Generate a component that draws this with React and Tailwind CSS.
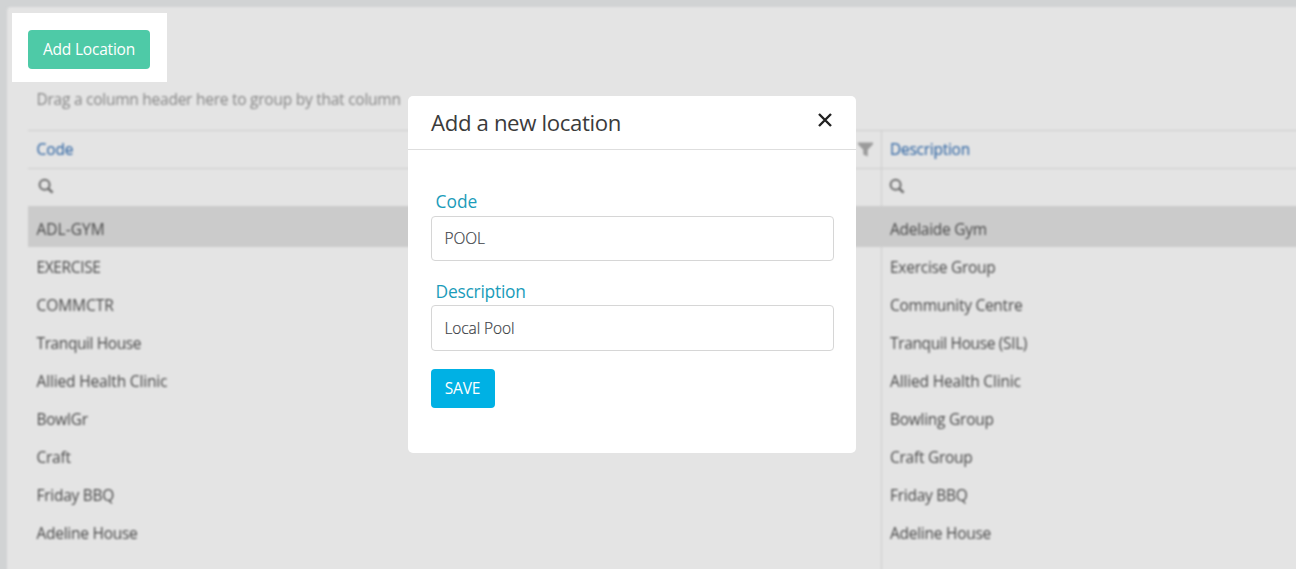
import React from "react";

const rows = [
  { code: "ADL-GYM", codeClass: "tracking-[0.02px]", description: "Adelaide Gym", selected: true },
  { code: "EXERCISE", codeClass: "tracking-[-0.36px]", description: "Exercise Group" },
  { code: "COMMCTR", codeClass: "tracking-[-0.05px]", description: "Community Centre" },
  { code: "Tranquil House", codeClass: "tracking-[-0.4px]", description: "Tranquil House (SIL)", descriptionClass: "tracking-[-0.36px]" },
  { code: "Allied Health Clinic", codeClass: "tracking-[-0.15px]", description: "Allied Health Clinic", descriptionClass: "tracking-[-0.15px]" },
  { code: "BowlGr", description: "Bowling Group" },
  { code: "Craft", description: "Craft Group" },
  { code: "Friday BBQ", description: "Friday BBQ" },
  { code: "Adeline House", description: "Adeline House" },
];

function SearchIcon() {
  return (
    <svg className="size-4 text-[#6c6c6c]" viewBox="0 0 16 16" fill="none" stroke="currentColor">
      <circle cx="6.6" cy="6.8" r="5" strokeWidth="2" />
      <path d="M10.2 10.6 14.6 14.6" strokeWidth="2.6" />
    </svg>
  );
}

function FilterIcon() {
  return (
    <svg className="h-[15px] w-[15px] text-[#9b9b9b]" viewBox="0 0 15 15" fill="currentColor">
      <path d="M0 0.5h15v1.8L9.7 7.8V14.5L5.3 12.5V7.8L0 2.3z" />
    </svg>
  );
}

function LocationsTable() {
  return (
    <div className="ml-[21px] text-[15.5px] tracking-[-0.26px] text-[#484848]">
      <div className="grid h-[38px] grid-cols-[854px_1fr] border-t border-[#cccccc] text-[#3d6fa8] [-webkit-text-stroke:0.2px_#3d6fa8]">
        <div className="flex items-center justify-between border-r border-[#cccccc] pr-2 pl-[8.5px]">
          <span className="tracking-[-0.1px]">Code</span>
          <FilterIcon />
        </div>
        <div className="flex items-center pl-2">Description</div>
      </div>
      <div className="grid h-[38px] grid-cols-[854px_1fr] border-t border-[#cccccc]">
        <div className="flex items-center border-r border-[#cccccc] pb-[3px] pl-[9.5px]"><SearchIcon /></div>
        <div className="flex items-center pb-[3px] pl-[7px]"><SearchIcon /></div>
      </div>
      {rows.map((row) => (
        <div
          key={row.code}
          className={
            row.selected
              ? "grid h-[41px] grid-cols-[854px_1fr] bg-[#cbcbcb] pt-[3px]"
              : "grid h-[38.1px] grid-cols-[854px_1fr]"
          }
        >
          <div className="flex items-center border-r border-[#cccccc] pt-[2.4px] pl-[8.5px]">
            <span className={row.codeClass}>{row.code}</span>
          </div>
          <div className="flex items-center pt-[2.4px] pl-2">
            <span className={row.descriptionClass}>{row.description}</span>
          </div>
        </div>
      ))}
      <div className="grid h-10 grid-cols-[854px_1fr]"><div className="border-r border-[#cccccc]" /></div>
    </div>
  );
}

function Field({ label, labelClass, value, inputClass, className }) {
  return (
    <label className={className}>
      <span className={`block h-7 pl-[5px] text-[17.4px] text-[#1b9cba] ${labelClass}`}>{label}</span>
      <input
        className={`block w-full rounded-[4px] border border-[#d6d6d6] bg-white px-[13px] pb-px text-[15.5px] font-light tracking-[-0.1px] text-[#3c4146] outline-none [-webkit-text-stroke:0.2px_#3c4146] ${inputClass}`}
        defaultValue={value}
      />
    </label>
  );
}

function LocationDialog() {
  return (
    <div role="dialog" className="absolute top-24 left-[408px] flex h-[357px] w-[448px] flex-col rounded-[5px] bg-white">
      <div className="flex h-[54px] shrink-0 items-center justify-between border-b border-[#dedede] pr-[24px] pl-[23px]">
        <h2 className="text-[22.2px] tracking-[-0.36px] text-[#3b3b3b]">Add a new location</h2>
        <button aria-label="Close" className="mb-[5px]">
          <svg className="size-[14px] text-[#222222]" viewBox="0 0 14 14" fill="none" stroke="currentColor" strokeWidth="2.4">
            <path d="M1 1 13 13M13 1 1 13" />
          </svg>
        </button>
      </div>
      <div className="flex flex-col px-[22.5px] pt-[38px]">
        <Field label="Code" labelClass="leading-[26px]" value="POOL" inputClass="h-[45px]" />
        <Field label="Description" labelClass="leading-7 tracking-[-0.24px]" value="Local Pool" inputClass="h-[46px]" className="mt-4" />
        <button className="mt-[18px] flex h-[39px] w-16 items-center justify-center rounded-[4px] bg-[#00b1e4] text-[15.5px] tracking-[-0.2px] text-white">
          SAVE
        </button>
      </div>
    </div>
  );
}

export default function App() {
  return (
    <div className="relative h-[569px] w-[1296px] overflow-hidden bg-[#d1d3d4] pt-[7px] pl-[7px] font-['Open_Sans','Noto_Sans',sans-serif]">
      <div className="h-[600px] w-[1310px] rounded-tl-[4px] bg-[#e4e4e4] blur-[0.8px]">
        <div className="flex h-[123px] items-end pb-[19px] pl-[29.5px]">
          <span className="text-[15.5px] leading-6 tracking-[-0.25px] text-[#858585]">Drag a column header here to group by that column</span>
        </div>
        <LocationsTable />
      </div>
      <div className="absolute top-[13px] left-[12px] h-[69px] w-[155px] bg-white px-4 py-[17px]">
        <button className="h-[39px] w-[122px] rounded-[4px] bg-[#4ecaa7] text-[15.5px] tracking-[-0.2px] text-white">Add Location</button>
      </div>
      <LocationDialog />
    </div>
  );
}
